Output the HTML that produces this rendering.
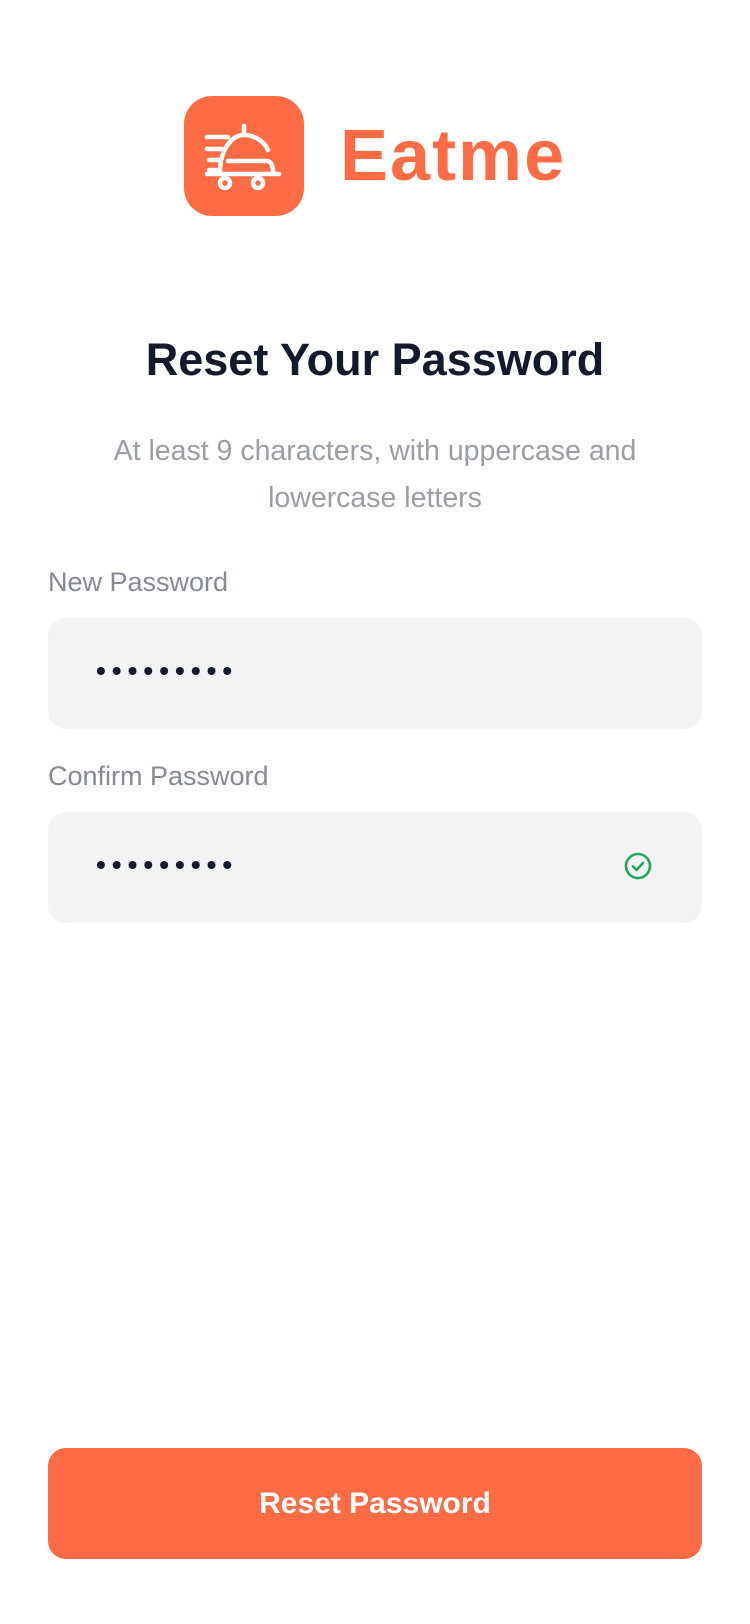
<!DOCTYPE html>
<html><head><meta charset="utf-8"><style>
body{margin:0;width:750px;height:1624px;background:#fff;font-family:"Liberation Sans",sans-serif;position:relative;overflow:hidden}
.abs{position:absolute}
.logo{left:184px;top:96px;width:120px;height:120px;border-radius:28px;background:#ff6b45}
.brand{left:340px;top:112px;font-size:72px;font-weight:bold;color:#ff6b45;letter-spacing:2px;line-height:88px}
.title{left:0;width:750px;top:330px;text-align:center;font-size:45px;font-weight:bold;color:#131a2c;line-height:60px}
.sub{left:0;width:750px;top:428px;text-align:center;font-size:28.5px;color:#9a9ea6;line-height:47px}
.label{left:48px;font-size:27px;color:#868a96;line-height:34px}
.field{left:48px;width:654px;height:111px;border-radius:18px;background:#f3f3f5}
.dots{left:96px;font-size:28px;color:#131a2c;letter-spacing:6px;font-weight:bold}
.btn{left:48px;top:1448px;width:654px;height:111px;border-radius:18px;background:#ff6b45;color:#fff;font-size:30px;font-weight:bold;text-align:center;line-height:111px}
</style></head><body>
<div class="abs logo">
<svg width="120" height="120" viewBox="0 0 120 120" fill="none" stroke="#fff" stroke-width="4.5" stroke-linecap="round" stroke-linejoin="round">
<path d="M60 30V37"/>
<path d="M36 76C36 55 47 39 60 39C70 39 80 45 84 54"/>
<path d="M23 41H44M23 53H38M25 64H35M25 74H32"/>
<path d="M23 78H95"/>
<path d="M44 65H83C87 65 89 70 89 76"/>
<circle cx="41" cy="87" r="5"/><circle cx="74" cy="87" r="5"/>
</svg>
</div>
<div class="abs brand">Eatme</div>
<div class="abs title">Reset Your Password</div>
<div class="abs sub">At least 9 characters, with uppercase and<br>lowercase letters</div>
<div class="abs label" style="top:565px">New Password</div>
<div class="abs field" style="top:618px"></div>
<div class="abs dots" style="top:655px">•••••••••</div>
<div class="abs label" style="top:759px">Confirm Password</div>
<div class="abs field" style="top:812px"></div>
<div class="abs dots" style="top:849px">•••••••••</div>
<svg class="abs" style="left:624px;top:852px" width="28" height="28" viewBox="0 0 28 28" fill="none" stroke="#22a85a" stroke-width="2.6" stroke-linecap="round" stroke-linejoin="round"><circle cx="14" cy="14" r="12"/><path d="M9 14.5L12.5 18L19 11"/></svg>
<div class="abs btn">Reset Password</div>
</body></html>
